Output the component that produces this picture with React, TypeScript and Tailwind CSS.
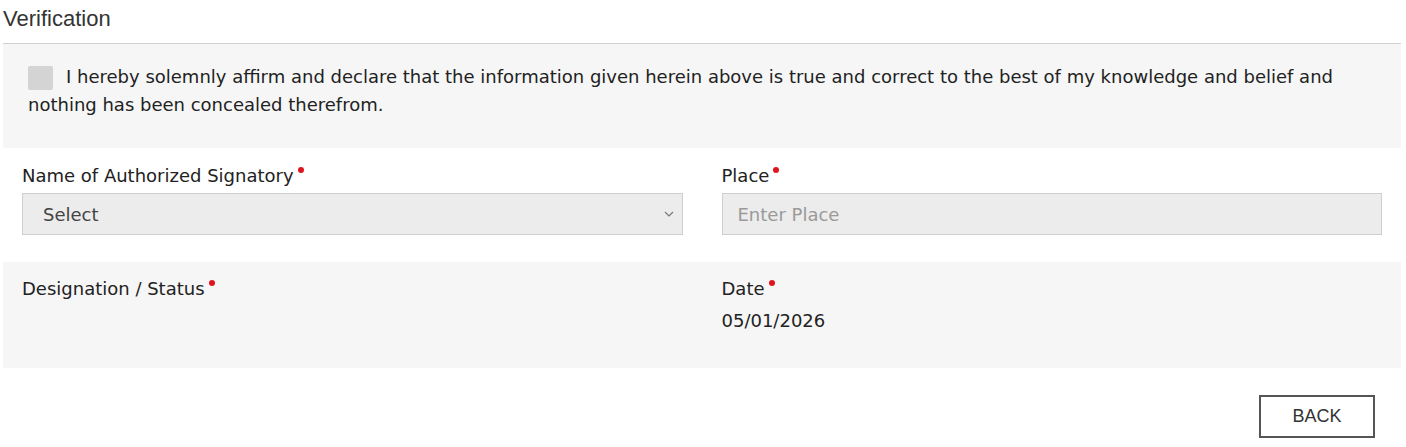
function Req() {
  return <span className="ml-[4px] inline-block h-[6px] w-[6px] -translate-y-[6px] rounded-full bg-[#e0141e] align-middle" />;
}

function Label({ children }: { children: string }) {
  return (
    <div className="flex items-center text-[18px] leading-[20px] text-[#222]">
      <span>{children}</span>
      <Req />
    </div>
  );
}

export default function App() {
  return (
    <div className="min-h-[447px] w-[1406px] bg-white font-['DejaVu_Sans',Verdana,sans-serif] text-[#222]">
      <div className="pl-[3px] pr-[5px]">
        <div className="border-b border-[#cfcfcf] pb-[10px] pt-[5px] font-['Liberation_Sans',Arial,sans-serif] text-[22px] leading-[28px] text-[#333]">
          Verification
        </div>

        <div className="bg-[#f6f6f6] px-[25px] pb-[29px] pt-[19px] text-[18px] leading-[28px]">
          <span className="mr-[13px] inline-block h-[24px] w-[25px] rounded-[2px] bg-[#d4d4d4] align-middle" />
          I hereby solemnly affirm and declare that the information given herein above is true and correct to the best of my knowledge and belief and nothing has been concealed therefrom.
        </div>

        <div className="grid grid-cols-2 gap-x-[39px] px-[19px] pb-[27px] pt-[18px]">
          <div>
            <Label>Name of Authorized Signatory</Label>
            <div className="mt-[7px] flex h-[42px] items-center justify-between border border-[#cfcfcf] bg-[#ececec] pl-[20px] pr-[6px] text-[18px] text-[#444]">
              <span>Select</span>
              <svg width="14" height="14" viewBox="0 0 14 14" fill="none" stroke="#777" strokeWidth="1.2">
                <path d="M3 5l4 4 4-4" />
              </svg>
            </div>
          </div>
          <div>
            <Label>Place</Label>
            <div className="mt-[7px] flex h-[42px] items-center border border-[#cfcfcf] bg-[#ececec] pl-[15px] text-[18px] text-[#9a9a9a]">
              Enter Place
            </div>
          </div>
        </div>

        <div className="grid h-[106px] grid-cols-2 gap-x-[39px] bg-[#f6f6f6] px-[19px] pt-[17px]">
          <div>
            <Label>Designation / Status</Label>
          </div>
          <div>
            <Label>Date</Label>
            <div className="mt-[12px] text-[18px] leading-[20px]">05/01/2026</div>
          </div>
        </div>

        <div className="flex justify-end pr-[26px] pt-[27px]">
          <button className="h-[43px] w-[116px] border-2 border-[#555] bg-white font-['Liberation_Sans',Arial,sans-serif] text-[18px] text-[#333]">
            BACK
          </button>
        </div>
      </div>
    </div>
  );
}
